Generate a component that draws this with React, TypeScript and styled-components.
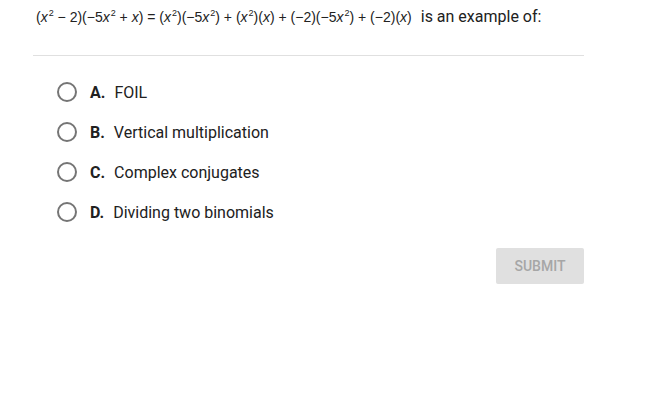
import React from 'react';
import styled, { createGlobalStyle } from 'styled-components';

const GlobalStyle = createGlobalStyle`
  body {
    margin: 0;
    background: #fff;
    font-family: Roboto, 'Liberation Sans', sans-serif;
  }
`;

const Page = styled.div`
  width: 551px;
  margin-left: 33px;
  padding-top: 7px;
`;

const Question = styled.div`
  display: flex;
  align-items: baseline;
  padding-left: 3px;
  height: 24px;
  white-space: nowrap;
`;

const Math = styled.span`
  font-family: 'Liberation Sans', Arial, sans-serif;
  font-size: 14px;
  color: #222;
`;

const Var = styled.i`
  font-style: italic;
`;

const Sup = styled.sup`
  font-size: 9px;
  vertical-align: 6px;
  line-height: 0;
  margin-left: 1px;
`;

const Prompt = styled.span`
  margin-left: 9px;
  font-size: 16px;
  color: #212121;
`;

const Divider = styled.hr`
  margin: 24px 0 0;
  border: none;
  border-top: 1px solid #e0e0e0;
`;

const Options = styled.div`
  display: flex;
  flex-direction: column;
  gap: 20px;
  padding: 26px 0 0 24px;
`;

const Option = styled.label`
  display: flex;
  align-items: center;
  height: 20px;
  font-size: 16px;
  color: #212121;
  cursor: pointer;
`;

const Radio = styled.span`
  width: 16px;
  height: 16px;
  border: 2px solid #757575;
  border-radius: 50%;
  margin-right: 13px;
  flex-shrink: 0;
`;

const Letter = styled.b`
  font-weight: 700;
  margin-right: 9px;
`;

const Actions = styled.div`
  display: flex;
  justify-content: flex-end;
  margin-top: 26px;
`;

const SubmitButton = styled.button`
  width: 88px;
  height: 36px;
  border: none;
  border-radius: 2px;
  background: #e0e0e0;
  color: #a6a6a6;
  font-family: Roboto, 'Liberation Sans', sans-serif;
  font-size: 14px;
  font-weight: 500;
  text-transform: uppercase;
`;

const X = () => <Var>x</Var>;
const X2 = () => (
  <>
    <Var>x</Var>
    <Sup>2</Sup>
  </>
);

const options = [
  { letter: 'A.', text: 'FOIL' },
  { letter: 'B.', text: 'Vertical multiplication' },
  { letter: 'C.', text: 'Complex conjugates' },
  { letter: 'D.', text: 'Dividing two binomials' },
];

export default function App() {
  return (
    <>
      <GlobalStyle />
      <Page>
        <Question>
          <Math>
            (<X2 /> − 2)(−5<X2 /> + <X />) = (<X2 />)(−5<X2 />) + (<X2 />)(<X />) + (−2)(−5
            <X2 />) + (−2)(<X />)
          </Math>
          <Prompt>is an example of:</Prompt>
        </Question>
        <Divider />
        <Options>
          {options.map((o) => (
            <Option key={o.letter}>
              <Radio />
              <Letter>{o.letter}</Letter>
              {o.text}
            </Option>
          ))}
        </Options>
        <Actions>
          <SubmitButton disabled>Submit</SubmitButton>
        </Actions>
      </Page>
    </>
  );
}
